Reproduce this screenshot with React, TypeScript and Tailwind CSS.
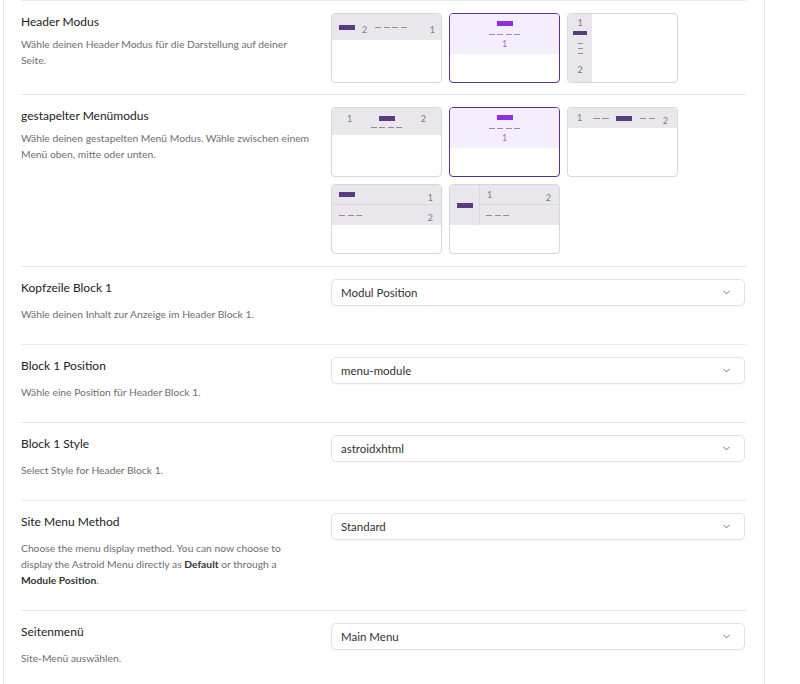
import React from "react";
import { ChevronDown } from "lucide-react";

const font = { fontFamily: 'Lato, "Noto Sans", sans-serif' };

function Dash({ w = 6 }: { w?: number }) {
  return <div className="h-[1px] bg-[#8f8f96]" style={{ width: w }} />;
}

function Dashes({ n, w = 6 }: { n: number; w?: number }) {
  return (
    <div className="flex gap-[2.5px]">
      {Array.from({ length: n }).map((_, i) => (
        <Dash key={i} w={w} />
      ))}
    </div>
  );
}

function PurpleDashes() {
  return (
    <div className="flex gap-[2.5px]">
      <div className="w-[6px] h-[1px] bg-[#a47bd6]" />
      <div className="w-[6px] h-[1px] bg-[#a47bd6]" />
      <div className="w-[6px] h-[1px] bg-[#a47bd6]" />
      <div className="w-[6px] h-[1px] bg-[#a47bd6]" />
    </div>
  );
}

function Logo() {
  return <div className="w-[16px] h-[5px] shrink-0 bg-[#5b3b7f]" />;
}

function Num({ children }: { children: React.ReactNode }) {
  return <span className="text-[9px] leading-[10px] text-[#7c7c84]">{children}</span>;
}

function Thumb({ children }: { children: React.ReactNode }) {
  return (
    <div className="w-[111px] h-[70px] rounded-[4px] border border-[#d8d5dc] overflow-hidden bg-white">
      {children}
    </div>
  );
}

function SelectedThumb() {
  return (
    <div className="w-[111px] h-[70px] rounded-[4px] border border-[#5f2f8f] overflow-hidden bg-white">
      <div className="h-[40px] bg-[#f5eefe] flex flex-col items-center pt-[7px]">
        <div className="w-[16px] h-[5px] shrink-0 bg-[#8b2ee6]" />
        <div className="mt-[8px]">
          <PurpleDashes />
        </div>
        <div className="mt-[4px] text-[9px] leading-[10px] text-[#9a6fd0]">1</div>
      </div>
    </div>
  );
}

function Select({ value }: { value: string }) {
  return (
    <div className="h-[27px] w-[414px] rounded-[5px] border border-[#e2e2e6] shadow-[0_1px_1px_rgba(0,0,0,0.03)] flex items-center pl-[9px] pr-[12px]">
      <span className="text-[11.5px] text-[#333]">{value}</span>
      <ChevronDown className="ml-auto text-[#666]" size={11} strokeWidth={2} />
    </div>
  );
}

function Row({
  title,
  desc,
  children,
  select = false,
  tight = false,
}: {
  title: string;
  desc: React.ReactNode;
  children: React.ReactNode;
  select?: boolean;
  tight?: boolean;
}) {
  return (
    <div className={`flex border-b border-[#e8e8ea] pt-[12px] ${tight ? "pb-[11px]" : "pb-[12px]"}`}>
      <div className="w-[310px] shrink-0 pb-[10px]">
        <div className="text-[12px] leading-[18px] text-[#222]">{title}</div>
        <div
          className={`text-[10.3px] leading-[16px] text-[#6e6e73] ${select ? "mt-[9px]" : "mt-[5px]"}`}
        >
          {desc}
        </div>
      </div>
      <div className="flex-1">{children}</div>
    </div>
  );
}

export default function App() {
  return (
    <div className="w-[800px] h-[684px] bg-white overflow-hidden" style={font}>
      <div className="ml-[3px] w-[762px] h-[684px] border-x border-[#e8e8ea] pl-[17px] pr-[18px]">
        <div className="border-t border-[#e8e8ea]">
          <Row
            tight
            title="Header Modus"
            desc={
              <>
                Wähle deinen Header Modus für die Darstellung auf deiner
                <br />
                Seite.
              </>
            }
          >
            <div className="flex gap-[7px]">
              <Thumb>
                <div className="h-[26px] bg-[#e9e6ec] flex items-center pl-[7px] pr-[6px]">
                  <Logo />
                  <div className="ml-[7px]">
                    <Num>2</Num>
                  </div>
                  <div className="ml-[8px]">
                    <Dashes n={4} />
                  </div>
                  <div className="ml-auto">
                    <Num>1</Num>
                  </div>
                </div>
              </Thumb>
              <SelectedThumb />
              <Thumb>
                <div className="flex h-full">
                  <div className="w-[24px] h-full bg-[#e9e6ec] flex flex-col items-center pt-[4px] pb-[3px]">
                    <Num>1</Num>
                    <div className="mt-[3px] w-[14px] h-[4px] bg-[#5b3b7f]" />
                    <div className="mt-[8px] flex flex-col gap-[4px]">
                      <Dash w={5} />
                      <Dash w={5} />
                      <Dash w={5} />
                    </div>
                    <div className="mt-auto">
                      <Num>2</Num>
                    </div>
                  </div>
                </div>
              </Thumb>
            </div>
          </Row>

          <Row
            title="gestapelter Menümodus"
            desc={
              <>
                Wähle deinen gestapelten Menü Modus. Wähle zwischen einem
                <br />
                Menü oben, mitte oder unten.
              </>
            }
          >
            <div className="grid grid-cols-[111px_111px_111px] gap-[7px]">
              <Thumb>
                <div className="h-[27px] bg-[#e9e6ec] flex items-start pt-[6px] px-[15px]">
                  <Num>1</Num>
                  <div className="flex-1 flex flex-col items-center pt-[2px]">
                    <Logo />
                    <div className="mt-[6px]">
                      <Dashes n={4} />
                    </div>
                  </div>
                  <Num>2</Num>
                </div>
              </Thumb>
              <SelectedThumb />
              <Thumb>
                <div className="h-[20px] bg-[#e9e6ec] flex items-center pl-[9px] pr-[9px]">
                  <Num>1</Num>
                  <div className="ml-[11px]">
                    <Dashes n={2} w={6.5} />
                  </div>
                  <div className="ml-[7px]">
                    <Logo />
                  </div>
                  <div className="ml-[8px]">
                    <Dashes n={2} w={6.5} />
                  </div>
                  <div className="ml-auto">
                    <Num>2</Num>
                  </div>
                </div>
              </Thumb>
              <Thumb>
                <div className="bg-[#e9e6ec]">
                  <div className="h-[20px] flex items-center pl-[7px] pr-[8px] border-b border-[#dcd8e0]">
                    <Logo />
                    <div className="ml-auto">
                      <Num>1</Num>
                    </div>
                  </div>
                  <div className="h-[20px] flex items-center pl-[7px] pr-[8px]">
                    <Dashes n={3} />
                    <div className="ml-auto">
                      <Num>2</Num>
                    </div>
                  </div>
                </div>
              </Thumb>
              <Thumb>
                <div className="h-[40px] bg-[#e9e6ec] flex">
                  <div className="w-[30px] flex items-center justify-center border-r border-[#dcd8e0]">
                    <Logo />
                  </div>
                  <div className="flex-1">
                    <div className="h-[20px] flex items-center pl-[7px] pr-[8px] border-b border-[#dcd8e0]">
                      <Num>1</Num>
                      <div className="ml-auto">
                        <Num>2</Num>
                      </div>
                    </div>
                    <div className="h-[20px] flex items-center pl-[6px]">
                      <Dashes n={3} />
                    </div>
                  </div>
                </div>
              </Thumb>
            </div>
          </Row>

          <Row select title="Kopfzeile Block 1" desc="Wähle deinen Inhalt zur Anzeige im Header Block 1.">
            <Select value="Modul Position" />
          </Row>
          <Row select title="Block 1 Position" desc="Wähle eine Position für Header Block 1.">
            <Select value="menu-module" />
          </Row>
          <Row select title="Block 1 Style" desc="Select Style for Header Block 1.">
            <Select value="astroidxhtml" />
          </Row>
          <Row
            select
            title="Site Menu Method"
            desc={
              <>
                Choose the menu display method. You can now choose to
                <br />
                display the Astroid Menu directly as <b className="font-bold text-[#333]">Default</b> or through a
                <br />
                <b className="font-bold text-[#333]">Module Position</b>.
              </>
            }
          >
            <Select value="Standard" />
          </Row>
          <Row select title="Seitenmenü" desc="Site-Menü auswählen.">
            <Select value="Main Menu" />
          </Row>
        </div>
      </div>
    </div>
  );
}
